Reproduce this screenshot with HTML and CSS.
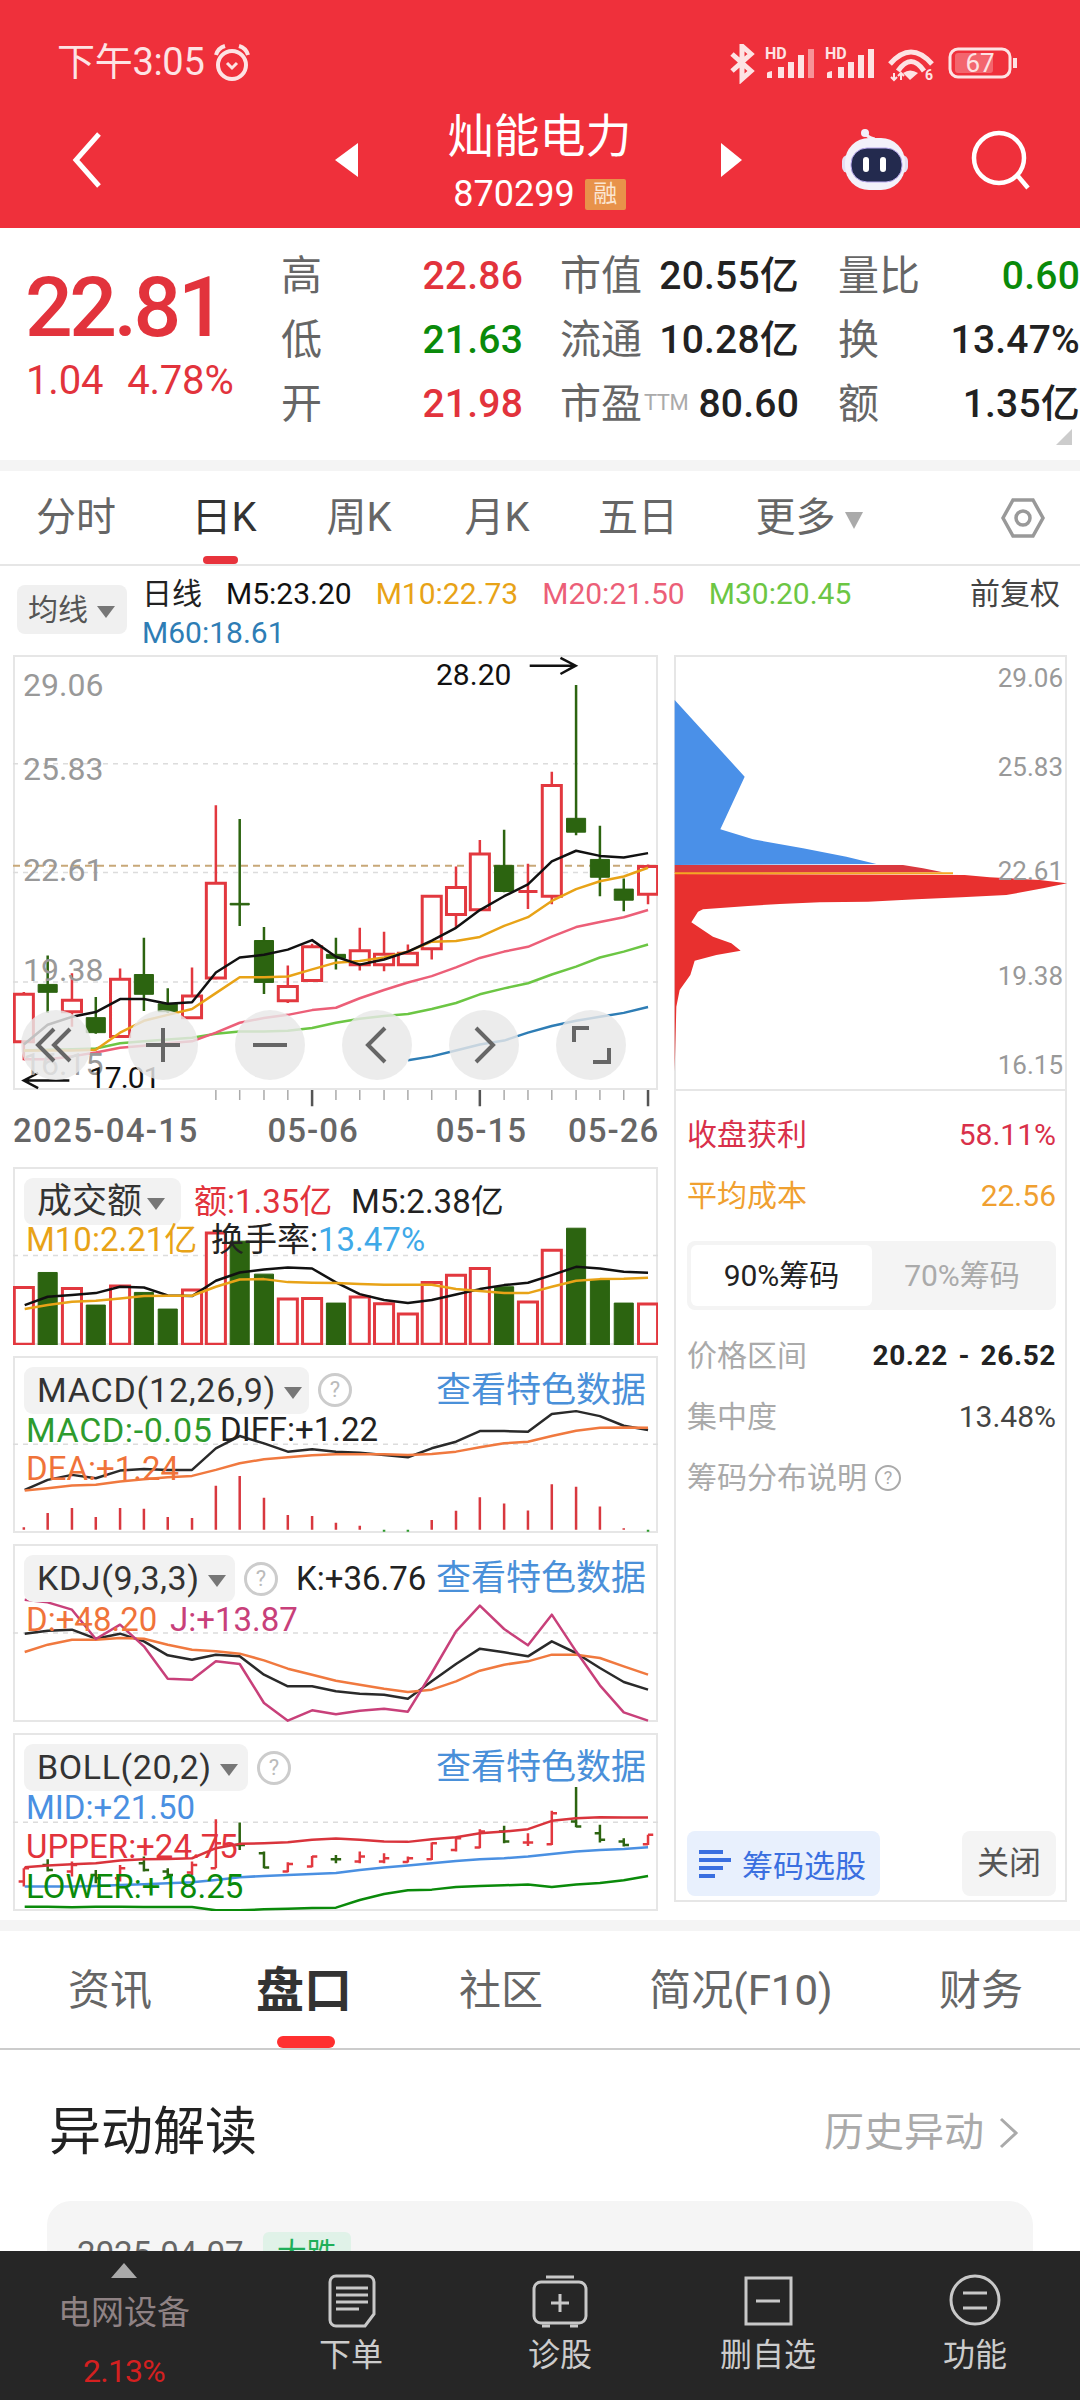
FILE: index.html
```html
<!DOCTYPE html>
<html lang="zh-CN">
<head>
<meta charset="utf-8">
<title>灿能电力</title>
<link rel="stylesheet" href="styles.css">
</head>
<body>
<div class="page">
<header class="head">
  <div class="status">
    <span class="clock">下午3:05</span>
    <svg class="alarm" viewBox="0 0 40 40"><circle cx="20" cy="23" r="14"/><path d="M4 13Q6 6 13 4M36 13Q34 6 27 4"/><path class="thin" d="M15 21L20 26L25 21"/></svg>
    <svg class="sysicons" viewBox="0 0 290 40">
      <path class="st" d="M2 10L21 27L12 35V2L21 10L2 27"/>
      <text class="hd" x="35" y="15">HD</text>
      <path class="sf" d="M37 29q0-1 5-2v7h-5zM48 23h6v11h-6zM58 18h6v16h-6zM68 11h6v23h-6z"/><path class="sf dim" d="M78 5h6v29h-6z"/>
      <text class="hd" x="95" y="15">HD</text>
      <path class="sf" d="M97 29q0-1 5-2v7h-5zM108 23h6v11h-6zM118 18h6v16h-6zM128 11h6v23h-6zM138 5h6v29h-6z"/>
      <path class="st" d="M160 20Q181 -4 202 20M168 27Q181 8 194 27"/>
      <path class="sf" d="M173 29Q180 24 188 29L180 36Z"/>
      <path class="st fine" d="M164 29V36M161 33L164 36L167 33M171 36V29M168 32L171 29L174 32"/>
      <text class="hd six" x="195" y="36">6</text>
      <rect class="level" x="225" y="9" width="38" height="20" rx="3"/>
      <rect class="batt" x="220" y="5" width="60" height="28" rx="8"/>
      <path class="sf" d="M283 14h4v10h-4z"/>
      <text class="pct" x="250" y="28">67</text>
    </svg>
  </div>
  <nav class="nav">
    <svg class="back" viewBox="0 0 32 58"><path d="M28 3L5 29L28 55"/></svg>
    <span class="tri-l"></span>
    <div class="title">
      <div class="name">灿能电力</div>
      <div class="code">870299<span class="rong">融</span></div>
    </div>
    <span class="tri-r"></span>
    <svg class="robot" viewBox="0 0 66 62">
      <path class="ant" d="M23 5Q29 10 33 10"/>
      <circle class="rb-head" cx="23" cy="4" r="4"/>
      <rect class="rb-ear" x="0" y="26" width="66" height="18" rx="6"/>
      <rect class="rb-head" x="3" y="9" width="60" height="52" rx="24"/>
      <rect class="rb-face" x="9" y="19" width="51" height="34" rx="16"/>
      <rect class="rb-eye" x="21" y="28" width="6" height="15" rx="3"/>
      <rect class="rb-eye" x="38" y="28" width="6" height="15" rx="3"/>
    </svg>
    <svg class="search" viewBox="0 0 60 60"><circle cx="29" cy="28" r="25"/><path d="M47 45L58 58"/></svg>
  </nav>
</header>

<section class="quote">
  <div class="now">
    <div class="price">22.81</div>
    <div class="chg"><span>1.04</span><span>4.78%</span></div>
  </div>
  <div class="stats">
    <div class="stat"><span class="k">高</span><b class="up">22.86</b></div>
    <div class="stat"><span class="k">市值</span><b>20.55亿</b></div>
    <div class="stat"><span class="k">量比</span><b class="down">0.60</b></div>
    <div class="stat"><span class="k">低</span><b class="down">21.63</b></div>
    <div class="stat"><span class="k">流通</span><b>10.28亿</b></div>
    <div class="stat"><span class="k">换</span><b>13.47%</b></div>
    <div class="stat"><span class="k">开</span><b class="up">21.98</b></div>
    <div class="stat"><span class="k">市盈<sup class="ttm">TTM</sup></span><b>80.60</b></div>
    <div class="stat"><span class="k">额</span><b>1.35亿</b></div>
  </div>
  <span class="corner"></span>
</section>
<div class="band"></div>

<div class="ktabs">
  <span class="ktab">分时</span>
  <span class="ktab on">日K</span>
  <span class="ktab">周K</span>
  <span class="ktab">月K</span>
  <span class="ktab">五日</span>
  <span class="ktab">更多<i class="caret big"></i></span>
  <svg class="hex" viewBox="0 0 44 44"><path d="M12 4H32L42 22L32 40H12L2 22Z"/><circle cx="22" cy="22" r="7"/></svg>
</div>

<div class="ctrl">
  <span class="mabtn">均线<i class="caret"></i></span>
  <div class="legend">
    <div class="lrow"><span>日线</span><span class="c5">M5:23.20</span><span class="c10">M10:22.73</span><span class="c20">M20:21.50</span><span class="c30">M30:20.45</span><span class="fq">前复权</span></div>
    <div class="lrow"><span class="c60">M60:18.61</span></div>
  </div>
</div>

<div class="charts">
  <div class="leftcol">
    <div class="panel main">
      <svg class="plot" viewBox="30 240 1488 1100" preserveAspectRatio="none">
        <path class="dash" d="M30 515H1518M30 790H1518M30 1067H1518"/>
        <path class="pricedash" d="M30 773H1518"/>
        <path class="wick-r" d="M55 1092V1265M166 1045V1180M277 1033V1208M443 1030V1160M498 620V1060M664 1025V1120M720 970V1065M830 930V1038M886 940V1040M941 972V1025M996 848V1010M1052 775V930M1107 708V886M1218 768V882M1273 535V870M1495 770V870"/>
        <path class="wick-g" d="M110 1000V1145M221 1105V1198M332 955V1140M387 1083V1145M553 655V925M609 928V1097M775 955V1035M1163 682V840M1329 316V696M1384 672V850M1439 805V888"/>
        <path class="body-r" d="M33 1098h44V1218h-44ZM144 1113h44V1142h-44ZM255 1060h44V1205h-44ZM421 1102h44V1157h-44ZM476 817h44V1057h-44ZM642 1078h44V1114h-44ZM698 978h44V1063h-44ZM808 988h44V1023h-44ZM864 997h44V1023h-44ZM919 994h44V1023h-44ZM974 850h44V983h-44ZM1030 828h44V896h-44ZM1085 743h44V884h-44ZM1196 838h44M1251 570h44V850h-44ZM1473 775h44V845h-44Z"/>
        <path class="body-g" d="M88 1073h44V1093h-44ZM199 1157h44V1195h-44ZM310 1048h44V1098h-44ZM365 1122h44V1142h-44ZM531 868h44v4h-44ZM587 962h44V1068h-44ZM753 997h44V1007h-44ZM1141 772h44V838h-44ZM1307 653h44V688h-44ZM1362 757h44V802h-44ZM1417 832h44V860h-44Z"/>
        <polyline class="ln l-60" points="941,1265 996,1255 1052,1240 1107,1225 1163,1215 1218,1195 1273,1178 1329,1165 1384,1155 1439,1145 1495,1130"/>
        <polyline class="ln l-30" points="55,1240 110,1238 166,1237 221,1235 277,1222 332,1217 387,1212 443,1208 498,1198 553,1192 609,1192 664,1190 720,1183 775,1170 830,1160 886,1153 941,1148 996,1135 1052,1120 1107,1098 1163,1083 1218,1070 1273,1048 1329,1028 1384,1005 1439,990 1495,972"/>
        <polyline class="ln l-20" points="55,1262 110,1262 166,1255 221,1245 277,1233 332,1228 387,1222 443,1217 498,1195 553,1170 609,1158 664,1150 720,1138 775,1132 830,1108 886,1087 941,1068 996,1052 1052,1030 1107,1006 1163,990 1218,978 1273,952 1329,928 1384,915 1439,903 1495,885"/>
        <polyline class="ln l-10" points="55,1240 110,1240 166,1240 221,1238 277,1195 332,1165 387,1150 443,1135 498,1095 553,1055 609,1055 664,1053 720,1035 775,1018 830,1014 886,1005 941,990 996,965 1052,963 1107,953 1163,925 1218,903 1273,862 1329,832 1384,812 1439,800 1495,778"/>
        <polyline class="ln l-5" points="55,1225 110,1175 166,1155 221,1143 277,1110 332,1110 387,1122 443,1118 498,1043 553,1005 609,998 664,985 720,961 775,1003 830,1023 886,1010 941,990 996,962 1052,930 1107,885 1163,850 1218,820 1273,762 1329,735 1384,748 1439,752 1495,741"/>
        <path class="arrow" d="M1222 267H1328M1293 247L1328 267L1293 288M160 1316H55M88 1297L55 1316L88 1335"/>
      </svg>
      <span class="ylab y1">29.06</span>
      <span class="ylab y2">25.83</span>
      <span class="ylab y3">22.61</span>
      <span class="ylab y4">19.38</span>
      <span class="ylab y5">16.15</span>
      <span class="mark hi">28.20</span>
      <span class="mark lo">17.01</span>
      <div class="tools">
        <span class="tool"><svg viewBox="0 0 70 70"><path d="M33 19L17 35L33 51M49 19L33 35L49 51"/></svg></span>
        <span class="tool"><svg viewBox="0 0 70 70"><path d="M35 18V52M18 35H52"/></svg></span>
        <span class="tool"><svg viewBox="0 0 70 70"><path d="M18 35H52"/></svg></span>
        <span class="tool"><svg viewBox="0 0 70 70"><path d="M43 18L26 35L43 52"/></svg></span>
        <span class="tool"><svg viewBox="0 0 70 70"><path d="M27 18L44 35L27 52"/></svg></span>
        <span class="tool"><svg viewBox="0 0 70 70"><path d="M18 32V18H33M37 52H53V38"/></svg></span>
      </div>
    </div>
    <svg class="ticks" viewBox="30 1340 1488 42" preserveAspectRatio="none">
      <path class="tick" d="M498 1340v25M553 1340v25M609 1340v25M664 1340v25M775 1340v25M830 1340v25M886 1340v25M941 1340v25M996 1340v25M1052 1340v25M1163 1340v25M1218 1340v25M1273 1340v25M1329 1340v25M1384 1340v25M1439 1340v25"/>
      <path class="tick major" d="M720 1340v40M1107 1340v40M1495 1340v40"/>
    </svg>
    <div class="dates"><span class="d1">2025-04-15</span><span class="d2">05-06</span><span class="d3">05-15</span><span class="d4">05-26</span></div>

    <div class="panel sub vol">
      <svg class="plot" viewBox="30 50 1488 535" preserveAspectRatio="none">
        <path class="dash" d="M30 316H1518"/>
        <path class="bar-r" d="M33 412h44V583h-44ZM144 415h44V583h-44ZM255 408h44V583h-44ZM421 420h44V583h-44ZM476 248h44V583h-44ZM642 447h44V583h-44ZM698 445h44V583h-44ZM808 441h44V583h-44ZM864 461h44V583h-44ZM919 492h44V583h-44ZM974 397h44V583h-44ZM1030 375h44V583h-44ZM1085 355h44V583h-44ZM1196 456h44V583h-44ZM1251 300h44V583h-44ZM1473 462h44V583h-44Z"/>
        <path class="body-g" d="M88 367h44V585h-44ZM199 465h44V585h-44ZM310 427h44V585h-44ZM365 477h44V585h-44ZM531 273h44V585h-44ZM587 372h44V585h-44ZM753 459h44V585h-44ZM1141 410h44V585h-44ZM1307 234h44V585h-44ZM1362 390h44V585h-44ZM1417 459h44V585h-44Z"/>
        <polyline class="ln l-5" points="57,465 110,440 166,435 221,429 277,410 332,412 387,436 443,438 498,392 553,367 609,358 664,352 720,355 775,397 830,432 886,450 941,459 996,450 1052,433 1107,417 1163,405 1218,398 1273,375 1329,350 1384,355 1439,365 1495,368"/>
        <polyline class="ln l-10" points="57,477 110,465 166,455 221,452 277,445 332,438 387,437 443,437 498,410 553,388 609,387 664,396 720,398 775,399 830,402 886,404 941,404 996,404 1052,417 1107,423 1163,429 1218,429 1273,410 1329,392 1384,387 1439,386 1495,383"/>
      </svg>
      <span class="pill w-vol">成交额<i class="caret"></i></span>
      <span class="val a1 up">额:1.35亿</span>
      <span class="val a2 ink">M5:2.38亿</span>
      <span class="val a3 c10">M10:2.21亿</span>
      <span class="val a4 ink">换手率:<span class="sky">13.47%</span></span>
    </div>

    <div class="panel sub macd">
      <svg class="plot" viewBox="30 617 1488 533" preserveAspectRatio="none">
        <path class="dash" d="M30 883H1518"/>
        <path class="hist-r" d="M55 1133V1140M110 1090V1140M166 1075V1140M221 1102V1140M277 1075V1140M332 1077V1140M387 1102V1140M443 1105V1140M498 1008V1140M553 978V1140M609 1044V1140M664 1096V1140M720 1099V1140M775 1119V1140M830 1128V1140M996 1111V1140M1052 1083V1140M1107 1042V1140M1163 1061V1140M1218 1082V1140M1273 1003V1140M1329 1011V1140M1384 1070V1140M1439 1136V1140"/>
        <path class="hist-g" d="M886 1140V1146M941 1140V1146M1495 1140V1146"/>
        <polyline class="ln l-ink" points="57,1020 110,990 166,975 221,985 277,962 332,957 387,960 443,960 498,895 553,858 609,880 664,905 720,898 775,905 830,908 886,915 941,922 996,895 1052,875 1107,843 1163,843 1218,845 1273,792 1329,783 1384,798 1439,827 1495,840"/>
        <polyline class="ln l-or" points="57,1022 110,1015 166,1007 221,1005 277,995 332,988 387,982 443,978 498,960 553,940 609,928 664,922 720,916 775,913 830,913 886,913 941,915 996,912 1052,905 1107,892 1163,880 1218,875 1273,858 1329,842 1384,833 1439,832 1495,833"/>
      </svg>
      <span class="pill w-macd">MACD(12,26,9)<i class="caret"></i></span>
      <span class="help h-macd">?</span>
      <span class="link">查看特色数据</span>
      <span class="val b1 grn">MACD:-0.05</span>
      <span class="val b2 ink">DIFF:+1.22</span>
      <span class="val b3 org">DEA:+1.24</span>
    </div>

    <div class="panel sub kdj">
      <svg class="plot" viewBox="30 13 1488 534" preserveAspectRatio="none">
        <path class="dash" d="M30 280H1518"/>
        <polyline class="ln l-ink" points="57,282 110,273 166,270 221,297 277,282 332,305 387,347 443,360 498,345 553,350 609,405 664,440 720,440 775,455 830,462 886,465 941,477 996,425 1052,373 1107,327 1163,338 1218,350 1273,305 1329,340 1384,385 1439,427 1495,450"/>
        <polyline class="ln l-or" points="57,337 110,315 166,300 221,300 277,295 332,297 387,315 443,330 498,335 553,342 609,362 664,387 720,405 775,423 830,435 886,447 941,457 996,450 1052,425 1107,393 1163,375 1218,365 1273,345 1329,345 1384,355 1439,380 1495,405"/>
        <polyline class="ln l-mag" points="57,180 110,188 166,210 221,298 277,255 332,320 387,417 443,420 498,365 553,373 609,490 664,543 720,512 775,524 830,513 886,507 941,516 996,400 1052,275 1107,198 1163,268 1218,317 1273,225 1329,335 1384,437 1439,518 1495,543"/>
      </svg>
      <span class="pill w-kdj">KDJ(9,3,3)<i class="caret"></i></span>
      <span class="help h-kdj">?</span>
      <span class="val c1 ink">K:+36.76</span>
      <span class="link">查看特色数据</span>
      <span class="val c2 org">D:+48.20</span>
      <span class="val c3 mag">J:+13.87</span>
    </div>

    <div class="panel sub boll">
      <svg class="plot" viewBox="30 580 1488 533" preserveAspectRatio="none">
        <path class="dash" d="M30 847H1518"/>
        <path class="ohlc-r" d="M55 985V1040M43 1025H55M55 985H67M166 965V1010M154 995H166M166 975H178M277 975V1025M265 1015H277M277 985H289M443 965V1005M431 998H443M443 975H455M498 838V985M486 985H498M498 910H510M664 967V997M652 995H664M664 972H676M720 948V982M708 980H720M720 950H732M830 935V970M818 965H830M830 950H842M886 940V970M874 965H886M886 955H898M941 950V968M929 966H941M941 955H953M996 908V960M984 958H996M996 910H1008M1052 890V935M1040 930H1052M1052 895H1064M1107 868V925M1095 923H1107M1107 875H1119M1218 880V918M1206 908H1230M1273 813V915M1261 913H1273M1273 820H1285M1495 885V915M1483 913H1495M1495 885H1507"/>
        <path class="ohlc-g" d="M110 958V995M98 975H110M110 990H122M221 990V1030M209 1005H221M221 1015H233M332 950V995M320 970H332M332 990H344M387 985V1015M375 995H387M387 1005H399M553 848V930M541 915H565M609 935V985M597 940H609M609 983H621M775 945V970M763 958H787M1163 858V910M1151 875H1163M1163 905H1175M1329 742V862M1317 845H1329M1329 860H1341M1384 855V908M1372 880H1384M1384 900H1396M1439 895V920M1427 905H1439M1439 915H1451"/>
        <polyline class="ln l-red" points="57,982 110,977 166,973 221,970 277,962 332,958 387,957 443,955 498,925 553,912 609,910 664,907 720,900 775,896 830,900 886,905 941,906 996,898 1052,892 1107,880 1163,875 1218,868 1273,843 1329,835 1384,832 1439,833 1495,833"/>
        <polyline class="ln l-blue" points="57,1040 110,1040 166,1040 221,1038 277,1035 332,1033 387,1030 443,1027 498,1020 553,1012 609,1008 664,1005 720,1002 775,999 830,990 886,983 941,977 996,970 1052,963 1107,958 1163,955 1218,950 1273,942 1329,935 1384,930 1439,927 1495,922"/>
        <polyline class="ln l-dg" points="57,1100 110,1100 166,1102 221,1100 277,1100 332,1101 387,1101 443,1101 498,1111 553,1111 609,1108 664,1106 720,1104 775,1103 830,1080 886,1062 941,1051 996,1049 1052,1041 1107,1038 1163,1036 1218,1034 1273,1041 1329,1034 1384,1029 1439,1021 1495,1008"/>
      </svg>
      <span class="pill w-boll">BOLL(20,2)<i class="caret"></i></span>
      <span class="help h-boll">?</span>
      <span class="link">查看特色数据</span>
      <span class="val e1 blu">MID:+21.50</span>
      <span class="val e2 up">UPPER:+24.75</span>
      <span class="val e3 down">LOWER:+18.25</span>
    </div>
  </div>

  <aside class="rightcol">
    <div class="chip">
      <svg class="plot" viewBox="43 45 1179 1302" preserveAspectRatio="none">
        <path class="cp-blue" d="M45 180L255 410L182 568L280 598L430 625L560 650L650 672L45 675Z"/>
        <path class="cp-dark" d="M45 675L730 675L790 685L850 697L45 699Z"/>
        <path class="cp-red" d="M45 702L915 705L990 712L1140 720L1222 730L1150 745L1040 765L905 772L770 778L625 785L480 787L360 792L265 798L130 808L115 815L95 847L160 890L215 910L243 932L170 945L105 962L92 1005L60 1050L50 1100L45 1295Z"/>
        <path class="cp-avg" d="M45 700H880"/>
      </svg>
      <span class="rlab r1">29.06</span>
      <span class="rlab r2">25.83</span>
      <span class="rlab r3">22.61</span>
      <span class="rlab r4">19.38</span>
      <span class="rlab r5">16.15</span>
    </div>
    <div class="info">
      <div class="irow rose first"><span>收盘获利</span><span>58.11%</span></div>
      <div class="irow amber"><span>平均成本</span><span>22.56</span></div>
      <div class="seg"><span class="seg-on">90%筹码</span><span class="seg-off">70%筹码</span></div>
      <div class="irow gray mt26"><span>价格区间</span><b class="range">20.22 - 26.52</b></div>
      <div class="irow gray"><span>集中度</span><span class="dark">13.48%</span></div>
      <div class="irow gray start"><span>筹码分布说明</span><span class="help small">?</span></div>
      <div class="actions">
        <span class="pick"><svg viewBox="0 0 32 30"><path d="M0 3H24M0 11H32M0 19H24M0 27H16"/></svg>筹码选股</span>
        <span class="close">关闭</span>
      </div>
    </div>
  </aside>
</div>

<div class="band"></div>
<div class="btabs">
  <span class="btab">资讯</span>
  <span class="btab on">盘口</span>
  <span class="btab">社区</span>
  <span class="btab">简况(F10)</span>
  <span class="btab last">财务</span>
</div>
<div class="sechead">
  <h2>异动解读</h2>
  <span class="hist">历史异动<svg viewBox="0 0 20 32"><path d="M2 2L17 16L2 30"/></svg></span>
</div>
<div class="card"><span class="cdate">2025-04-07</span><span class="ctag">大跌</span></div>

<footer class="bar">
  <div class="bi first">
    <i class="uptri"></i>
    <span class="sector">电网设备</span>
    <span class="secpct">2.13%</span>
  </div>
  <div class="bi"><svg viewBox="0 0 60 56"><path d="M15 3H47a6 6 0 0 1 6 6V41L44 53H15a6 6 0 0 1-6-6V9a6 6 0 0 1 6-6Z"/><path d="M15 15H47M15 22H47M15 29H47M15 36H38"/></svg><span>下单</span></div>
  <div class="bi"><svg viewBox="0 0 60 56"><path d="M16 4H44"/><rect x="4" y="9" width="52" height="41" rx="7"/><path d="M12 53H20M40 53H48M30 21V39M21 30H39"/></svg><span>诊股</span></div>
  <div class="bi"><svg viewBox="0 0 60 56"><rect x="8" y="5" width="45" height="46"/><path d="M18 28H42"/></svg><span>删自选</span></div>
  <div class="bi"><svg viewBox="0 0 60 56"><circle cx="30" cy="27" r="24"/><path d="M18 20H42M18 35H42"/></svg><span>功能</span></div>
</footer>
</div>
</body>
</html>
```
FILE: styles.css
```css
* { box-sizing: border-box; }
html, body { margin: 0; padding: 0; background: #fff; }
body { font-family: Roboto, "Noto Sans CJK SC", sans-serif; color: #333; }
.page { position: relative; width: 1080px; height: 2400px; overflow: hidden; background: #fff; }
i { font-style: normal; display: inline-block; }
svg { display: block; }

/* header */
.head { height: 228px; background: #ef303b; color: #fff; }
.status { height: 100px; padding: 24px 0 0 57px; display: flex; align-items: center; position: relative; }
.clock { font-size: 38px; line-height: 76px; color: #fde3e4; letter-spacing: -.3px; }
.alarm { width: 40px; height: 40px; margin-left: 8px; fill: none; stroke: #fde3e4; stroke-width: 4; }
.alarm .thin { stroke-width: 3; }
.sysicons { position: absolute; left: 730px; top: 44px; width: 290px; height: 40px; }
.st { fill: none; stroke: #fde3e4; stroke-width: 5; }
.st.fine { stroke-width: 2; }
.sf { fill: #fde3e4; }
.sf.dim { opacity: .55; }
.hd { font-size: 16px; font-weight: 700; fill: #fde3e4; }
.hd.six { font-size: 14px; }
.level { fill: #fde3e4; opacity: .3; }
.batt { fill: none; stroke: #fde3e4; stroke-width: 3; }
.pct { font-size: 26px; fill: #fde3e4; text-anchor: middle; }
.nav { height: 128px; display: flex; align-items: center; padding: 0 0 8px 71px; }
.back { width: 32px; height: 58px; fill: none; stroke: #fff; stroke-width: 5; }
.tri-l, .tri-r { width: 0; height: 0; border-style: solid; border-color: transparent; }
.tri-l { margin-left: 232px; border-width: 17px 23px 17px 0; border-right-color: #fff; }
.tri-r { border-width: 17px 0 17px 21px; border-left-color: #fff; }
.title { width: 363px; align-self: flex-start; text-align: center; }
.name { font-size: 46px; line-height: 72px; }
.code { font-size: 36px; line-height: 46px; display: flex; justify-content: center; align-items: center; margin-top: -1px; margin-left: 0; color: #fff; }
.rong { width: 41px; height: 31px; margin-left: 10px; background: #e8924a; border-radius: 2px; font-size: 24px; line-height: 31px; text-align: center; color: #fbe6d2; }
.robot { width: 66px; height: 62px; margin-left: 100px; }
.ant { fill: none; stroke: #f5eef5; stroke-width: 3; }
.rb-ear { fill: #e4dff2; }
.rb-head { fill: #f3f1fa; }
.rb-face { fill: #232a4e; stroke: #b9a9ee; stroke-width: 1; }
.rb-eye { fill: #fff; }
.search { width: 60px; height: 60px; margin-left: 62px; fill: none; stroke: #fff; stroke-width: 4.5; }

/* quote */
.quote { height: 232px; position: relative; display: flex; padding-left: 25px; }
.now { width: 255px; padding-top: 35px; color: #e2333c; }
.price { font-size: 84px; line-height: 90px; font-weight: 500; letter-spacing: -3.4px; }
.chg { margin-top: 5px; padding-left: 1px; display: flex; gap: 24px; font-size: 40px; line-height: 46px; letter-spacing: -.2px; }
.stats { position: absolute; left: 281px; top: 16px; display: grid; grid-template-columns: 279px 278px 242px; grid-auto-rows: 64px; }
.stat { display: flex; justify-content: space-between; align-items: center; line-height: 64px; white-space: nowrap; }
.stat:nth-child(3n+1) { padding-right: 37px; }
.stat:nth-child(3n+2) { padding-right: 39px; }
.k { font-size: 41px; color: #666; display: flex; }
.stat b { font-size: 39px; font-weight: 500; color: #222; letter-spacing: .2px; }
.stat .up { color: #e2333c; }
.stat .down { color: #0a8a0a; }
.ttm { font-size: 22px; line-height: 22px; color: #aaa; margin: 20px 0 0 2px; letter-spacing: -.5px; vertical-align: baseline; }
.corner { position: absolute; right: 8px; bottom: 15px; width: 0; height: 0; border-style: solid; border-width: 0 0 16px 16px; border-color: transparent transparent #ccc transparent; }
.band { height: 11px; background: #f4f4f4; }

/* k tabs */
.ktabs { height: 95px; display: grid; grid-template-columns: 152px 144px 126px 150px 132px 210px 1fr; border-bottom: 2px solid #e6e6e6; align-items: center; }
.ktab { position: relative; height: 93px; line-height: 93px; text-align: center; font-size: 40px; color: #666; white-space: nowrap; }
.ktab.on { color: #333; }
.ktab.on::after { content: ""; position: absolute; left: 51px; bottom: 0; width: 35px; height: 8px; border-radius: 4px; background: #e8333c; }
.caret { width: 0; height: 0; border-style: solid; border-width: 12px 9px 0 9px; border-color: #777 transparent transparent transparent; margin-left: 12px; vertical-align: middle; }
.caret.big { border-width: 17px 9px 0 9px; border-top-color: #aaa; margin-left: 9px; }
.hex { width: 44px; height: 44px; margin-left: 87px; fill: none; stroke: #999; stroke-width: 3.5; }

/* controls */
.ctrl { height: 89px; display: flex; padding-left: 17px; }
.mabtn { width: 110px; height: 49px; margin-top: 19px; background: #f0f0f0; border-radius: 8px; font-size: 30px; line-height: 49px; padding-left: 11px; color: #555; white-space: nowrap; }
.mabtn .caret { margin-left: 9px; }
.legend { flex: 1; margin-left: 15px; padding: 8px 20px 0 0; font-size: 30px; line-height: 39px; color: #222; }
.lrow { display: flex; gap: 24px; white-space: nowrap; }
.fq { margin-left: auto; color: #444; }
.c5 { color: #111; }
.c10 { color: #e8a317; }
.c20 { color: #ec5f78; }
.c30 { color: #6cc644; }
.c60 { color: #2e7db5; }

/* chart grid */
.charts { height: 1265px; display: flex; gap: 16px; padding-left: 13px; }
.leftcol { width: 645px; }
.rightcol { width: 393px; height: 1247px; box-shadow: inset 0 0 0 2px #e6e6e6; display: flex; flex-direction: column; }
.panel { position: relative; width: 645px; overflow: hidden; box-shadow: inset 0 0 0 2px #e6e6e6; }
.panel.main { height: 435px; }
.panel.sub { height: 178px; margin-top: 11px; }
.panel.vol { margin-top: 16px; }
.panel.macd { height: 177px; }
.plot { position: absolute; left: 0; top: 0; width: 100%; height: 100%; }
.dash { fill: none; stroke: #dcdcdc; stroke-width: 1.5; stroke-dasharray: 5 5; vector-effect: non-scaling-stroke; }
.pricedash { fill: none; stroke: #c8a878; stroke-width: 2; stroke-dasharray: 7 5; vector-effect: non-scaling-stroke; }
.wick-r, .body-r, .ohlc-r { stroke: #e2383f; }
.wick-g, .body-g, .ohlc-g { stroke: #2c6410; }
.wick-r, .wick-g { fill: none; stroke-width: 2.5px; vector-effect: non-scaling-stroke; }
.body-r { fill: #fff; stroke-width: 3px; vector-effect: non-scaling-stroke; }
.body-g { fill: #2c6410; stroke-width: 1px; vector-effect: non-scaling-stroke; }
.bar-r { fill: #fff; stroke: #e2383f; stroke-width: 3px; vector-effect: non-scaling-stroke; }
.ohlc-r, .ohlc-g { fill: none; stroke-width: 2.5px; vector-effect: non-scaling-stroke; }
.hist-r, .hist-g { fill: none; stroke-width: 2.5px; vector-effect: non-scaling-stroke; }
.hist-r { stroke: #d8383f; }
.hist-g { stroke: #2e9b2e; }
.ln { fill: none; stroke-width: 2.5px; stroke-linejoin: round; vector-effect: non-scaling-stroke; }
.l-5 { stroke: #111; }
.l-10 { stroke: #e8a317; }
.l-20 { stroke: #ec5f78; }
.l-30 { stroke: #6cc644; }
.l-60 { stroke: #2e7db5; }
.l-ink { stroke: #2a2a2a; }
.l-or { stroke: #f0793f; }
.l-mag { stroke: #c8407a; }
.l-red { stroke: #d9343c; }
.l-blue { stroke: #4a90e2; }
.l-dg { stroke: #0a8a0a; }
.arrow { fill: none; stroke: #111; stroke-width: 2.5px; vector-effect: non-scaling-stroke; }

.ylab, .mark, .rlab, .val, .link { position: absolute; line-height: 40px; white-space: nowrap; }
.ylab { left: 10px; font-size: 32px; color: #999; }
.y1 { top: 10px; }
.y2 { top: 94px; }
.y3 { top: 195px; }
.y4 { top: 295px; }
.y5 { top: 389px; }
.mark { font-size: 30px; color: #111; }
.hi { left: 423px; top: 0; }
.lo { left: 76px; top: 403px; letter-spacing: -1px; }
.tools { position: absolute; left: 8px; top: 355px; display: flex; gap: 37px; }
.tool { width: 70px; height: 70px; border-radius: 50%; background: rgba(232, 232, 232, .82); }
.tool svg { width: 70px; height: 70px; fill: none; stroke: #666; stroke-width: 4; }

.ticks { width: 645px; height: 17px; }
.tick { fill: none; stroke: #aaa; stroke-width: 1.5px; vector-effect: non-scaling-stroke; }
.tick.major { stroke: #555; stroke-width: 2.5px; }
.dates { margin-top: 4px; height: 40px; display: flex; font-size: 33px; font-weight: 500; line-height: 40px; color: #666; white-space: nowrap; letter-spacing: 1px; }
.d1 { letter-spacing: 1.3px; }
.d2 { margin-left: 69px; }
.d3 { margin-left: 77px; }
.d4 { margin-left: 41px; }

.pill { position: absolute; left: 11px; top: 11px; height: 47px; background: #f2f2f2; border-radius: 9px; padding-left: 13px; font-size: 34px; line-height: 47px; color: #333; white-space: nowrap; }
.pill .caret { margin-left: 8px; }
.w-vol { width: 157px; font-size: 35px; }
.w-vol .caret { margin-left: 5px; }
.w-macd { width: 285px; letter-spacing: .8px; }
.w-kdj { width: 211px; letter-spacing: .6px; }
.w-boll { width: 224px; letter-spacing: .6px; }
.help { position: absolute; width: 34px; height: 34px; border: 3px solid #ccc; border-radius: 50%; font-size: 22px; line-height: 28px; text-align: center; color: #bbb; }
.h-macd { left: 305px; top: 17px; }
.h-kdj { left: 231px; top: 18px; }
.h-boll { left: 244px; top: 18px; }
.link { right: 12px; top: 15px; font-size: 35px; color: #4a90d9; }
.val { font-size: 33px; }
.up { color: #e2333c; }
.down { color: #0a8a0a; }
.ink { color: #222; }
.sky { color: #3fa9e8; }
.grn { color: #2e9b2e; }
.org { color: #f0733a; }
.mag { color: #c8407a; }
.blu { color: #4a90e2; }
.a1 { left: 181px; top: 15px; }
.a2 { left: 338px; top: 15px; }
.a3 { left: 13px; top: 53px; }
.a4 { left: 198px; top: 53px; }
.b1 { left: 13px; top: 54px; font-size: 34px; letter-spacing: .6px; }
.b2 { left: 207px; top: 54px; }
.b3 { left: 13px; top: 93px; }
.c1 { left: 283px; top: 15px; }
.c2 { left: 13px; top: 56px; }
.c3 { left: 157px; top: 56px; }
.e1 { left: 13px; top: 55px; }
.e2 { left: 13px; top: 94px; }
.e3 { left: 13px; top: 134px; }

/* chip panel */
.chip { position: relative; height: 434px; overflow: hidden; }
.cp-blue { fill: #4a90e8; }
.cp-dark { fill: #d9393f; }
.cp-red { fill: #e8302f; }
.cp-avg { fill: none; stroke: #f5a623; stroke-width: 2px; vector-effect: non-scaling-stroke; }
.rlab { right: 4px; font-size: 26px; color: #999; }
.r1 { top: 3px; }
.r2 { top: 92px; }
.r3 { top: 196px; }
.r4 { top: 301px; }
.r5 { top: 390px; }
.info { flex: 1; margin: 0 2px 2px; border-top: 2px solid #e6e6e6; display: flex; flex-direction: column; padding: 0 9px 4px 11px; }
.irow { display: flex; justify-content: space-between; font-size: 30px; line-height: 40px; margin-top: 21px; white-space: nowrap; }
.irow.first { margin-top: 24px; }
.irow.start { justify-content: flex-start; align-items: center; gap: 8px; }
.irow.mt26 { margin-top: 26px; }
.rose { color: #d9304a; }
.amber { color: #f0a030; }
.gray { color: #aaa; }
.dark { color: #444; }
.range { font-size: 28px; font-weight: 700; color: #222; letter-spacing: .6px; word-spacing: 3px; }
.help.small { position: static; width: 26px; height: 26px; border-width: 2px; font-size: 18px; line-height: 22px; color: #aaa; border-color: #aaa; }
.seg { height: 69px; margin-top: 25px; background: #f4f4f4; border-radius: 8px; display: flex; padding: 4px; font-size: 30px; line-height: 61px; text-align: center; }
.seg-on { width: 181px; background: #fff; border-radius: 6px; color: #222; }
.seg-off { flex: 1; color: #aaa; }
.actions { margin-top: auto; display: flex; justify-content: space-between; }
.pick { width: 193px; height: 65px; background: #e8f0fd; border-radius: 8px; display: flex; align-items: center; gap: 11px; padding-left: 12px; font-size: 31px; color: #3a6fe0; white-space: nowrap; }
.pick svg { width: 32px; height: 30px; fill: none; stroke: #3a6fe0; stroke-width: 4; }
.close { width: 94px; height: 65px; background: #f4f4f4; border-radius: 8px; font-size: 32px; line-height: 65px; text-align: center; color: #555; }

/* bottom tabs */
.btabs { height: 119px; display: grid; grid-template-columns: 220px 168px 226px 254px 212px; border-bottom: 2px solid #ccc; }
.btab { position: relative; height: 117px; line-height: 119px; text-align: center; font-size: 42px; color: #666; white-space: nowrap; }
.btab.on { font-size: 48px; font-weight: 700; color: #333; }
.btab.on::after { content: ""; position: absolute; left: 57px; bottom: 0; width: 58px; height: 12px; border-radius: 6px; background: #ff3030; }
.btab.last { padding-left: 14px; }
.sechead { display: flex; justify-content: space-between; align-items: center; padding: 43px 61px 0 49px; }
.sechead h2 { margin: 0; font-size: 52px; font-weight: 400; line-height: 80px; color: #222; }
.hist { display: flex; align-items: center; gap: 15px; font-size: 40px; line-height: 80px; color: #aaa; }
.hist svg { width: 20px; height: 32px; fill: none; stroke: #aaa; stroke-width: 3; }
.card { margin: 28px 47px 0; height: 220px; padding: 31px 0 0 30px; background: #f5f5f5; border-radius: 24px 24px 0 0; display: flex; align-items: flex-start; gap: 19px; }
.cdate { font-size: 33px; line-height: 44px; color: #666; }
.ctag { height: 44px; padding: 0 14px; background: #e0f2e8; border-radius: 6px; font-size: 30px; line-height: 44px; color: #1faf5a; }

/* bottom bar */
.bar { position: absolute; left: 0; right: 0; bottom: 0; height: 149px; background: #262626; display: grid; grid-template-columns: 248px 206px 212px 204px 210px; }
.bi { display: flex; flex-direction: column; align-items: center; padding-top: 22px; font-size: 32px; line-height: 40px; color: #ccc; white-space: nowrap; }
.bi svg { width: 60px; height: 56px; margin-bottom: 6px; fill: none; stroke: #c8c8c8; stroke-width: 3; }
.bi.first { padding-top: 12px; }
.uptri { width: 0; height: 0; border-style: solid; border-width: 0 13px 15px 13px; border-color: transparent transparent #aaa transparent; }
.sector { margin-top: 15px; font-size: 33px; color: #8f8284; }
.secpct { margin-top: 18px; font-size: 32px; letter-spacing: -.8px; color: #d42020; }
```
